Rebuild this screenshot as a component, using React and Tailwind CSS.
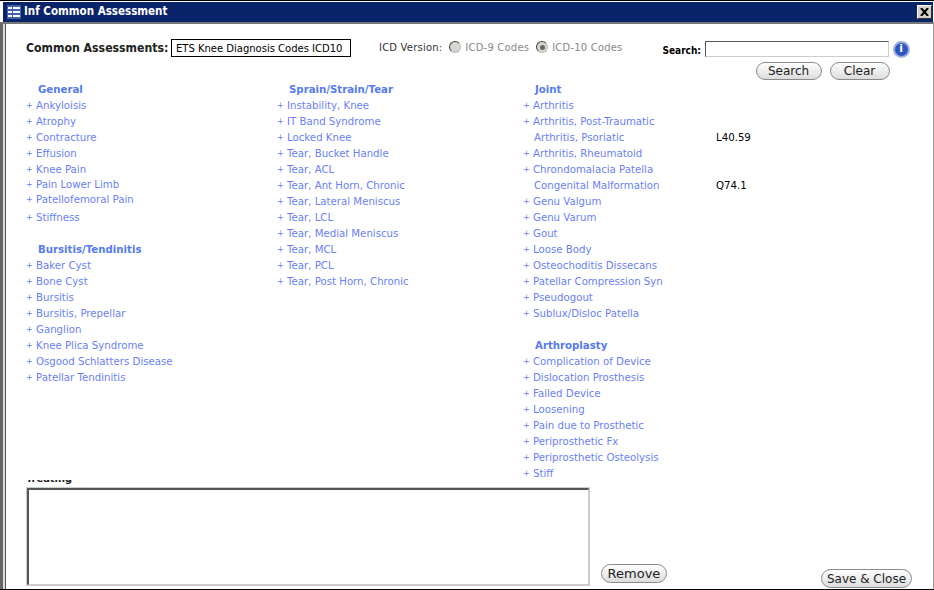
const font = { fontFamily: '"DejaVu Sans", sans-serif' };
const condensed = { fontFamily: '"DejaVu Sans Condensed", "DejaVu Sans", sans-serif' };

const Item = ({ label, className = '' }) => (
  <div className={`h-4 flex items-center text-[#6a80fa] text-[10.2px] leading-4 whitespace-nowrap ${className}`}>
    <span className="w-[10px] text-[8px]">+</span>
    <span>{label}</span>
  </div>
);

const Heading = ({ children, className = '' }) => (
  <div className={`h-4 pl-3 flex items-center text-[#557af2] text-[10.2px] font-bold ${className}`}>{children}</div>
);

const general = [
  ['Ankyloisis'], ['Atrophy'], ['Contracture'], ['Effusion'], ['Knee Pain'],
  ['Pain Lower Limb', '-mt-px'], ['Patellofemoral Pain', '-mt-px'], ['Stiffness', 'mt-[2px]'],
];
const bursitis = ['Baker Cyst', 'Bone Cyst', 'Bursitis', 'Bursitis, Prepellar', 'Ganglion', 'Knee Plica Syndrome', 'Osgood Schlatters Disease', 'Patellar Tendinitis'];
const sprain = ['Instability, Knee', 'IT Band Syndrome', 'Locked Knee', 'Tear, Bucket Handle', 'Tear, ACL', 'Tear, Ant Horn, Chronic', 'Tear, Lateral Meniscus', 'Tear, LCL', 'Tear, Medial Meniscus', 'Tear, MCL', 'Tear, PCL', 'Tear, Post Horn, Chronic'];
const joint = ['Arthritis', 'Arthritis, Post-Traumatic', ['Arthritis, Psoriatic', 'L40.59'], 'Arthritis, Rheumatoid', 'Chrondomalacia Patella', ['Congenital Malformation', 'Q74.1'], 'Genu Valgum', 'Genu Varum', 'Gout', 'Loose Body', 'Osteochoditis Dissecans', 'Patellar Compression Syn', 'Pseudogout', 'Sublux/Disloc Patella'];
const arthroplasty = ['Complication of Device', 'Dislocation Prosthesis', 'Failed Device', 'Loosening', 'Pain due to Prosthetic', 'Periprosthetic Fx', 'Periprosthetic Osteolysis', 'Stiff'];

const Pill = ({ children, className = '' }) => (
  <button className={`rounded-full border border-[#8a8a8a] bg-gradient-to-b from-white to-[#dcdcdc] text-[#222] text-[12px] leading-none flex items-center justify-center ${className}`}>{children}</button>
);

const Radio = ({ checked }) => (
  <span className="w-3 h-3 rounded-full border border-[#bbb] border-t-[#444] border-l-[#444] bg-[#d8d5cf] flex items-center justify-center">
    {checked && <span className="w-[5px] h-[5px] rounded-full bg-[#666]" />}
  </span>
);

export default function App() {
  return (
    <div className="w-[934px] h-[590px] overflow-hidden bg-white flex flex-col border-t border-t-black border-b border-b-black" style={font}>
      {/* Title bar */}
      <div className="h-[20px] mt-px ml-[3px] mr-px bg-[#0a246a] flex items-center justify-between pl-[4px] pr-[1px] shrink-0">
        <div className="flex items-center gap-[3px]">
          <svg width="14" height="14" viewBox="0 0 14 14">
            <rect width="14" height="14" fill="#3f62ad" />
            <path d="M1 2h4v2H1zM1 6h4v2H1zM1 10h4v2H1zM6 2h7v2H6zM6 6h7v2H6zM6 10h7v2H6z" fill="#fff" />
          </svg>
          <span className="text-white text-[11.500px] font-bold" style={condensed}>Inf Common Assessment</span>
        </div>
        <span className="w-[15px] h-[14px] bg-[#d4d0c8] border border-white border-r-[#333] border-b-[#333] flex items-center justify-center">
          <svg width="9" height="8" viewBox="0 0 9 8"><path d="M1 0l7 8M8 0L1 8" stroke="#000" strokeWidth="2" /></svg>
        </span>
      </div>

      {/* Window body */}
      <div className="flex-1 min-h-0 border-t-2 border-t-[#777] border-l-[3px] border-l-[#666] border-r border-r-[#999] flex">
        <div className="flex-1 min-w-0 border-l-2 border-l-[#ddd]">
          <div className="h-full border-l border-l-[#555] pl-[20px] flex flex-col">
            {/* Toolbar */}
            <div className="h-[46px] flex pt-[15px] shrink-0">
              <span className="w-[143px] pt-[1px] text-[12.200px] font-bold text-[#222] leading-4 whitespace-nowrap" style={condensed}>Common Assessments:</span>
              <span className="ml-[2px] w-[180px] h-[18px] border border-black flex items-center pl-[4px] text-[10px] text-black whitespace-nowrap">ETS Knee Diagnosis Codes ICD10</span>
              <div className="ml-[28px] mt-px flex items-center h-[14px] text-[10px] tracking-[0.2px] gap-[7px] whitespace-nowrap">
                <span className="text-[#333]">ICD Version:</span>
                <Radio />
                <span className="text-[#888] -ml-[3px] mt-px">ICD-9 Codes</span>
                <Radio checked />
                <span className="text-[#888] -ml-[3px] mt-px">ICD-10 Codes</span>
              </div>
              <div className="ml-[40px] mt-px flex flex-col">
                <div className="flex items-center">
                  <span className="w-[42px] text-[10px] font-bold text-black mt-[3px]" style={condensed}>Search:</span>
                  <span className="w-[184px] h-4 border border-[#ccc] border-t-[#555] border-l-[#555]" />
                  <span className="ml-[4px] w-[17px] h-[17px] rounded-full bg-[#2f55c4] border-2 border-[#9fb0d8] text-white text-[11px] font-bold flex items-center justify-center">i</span>
                </div>
                <div className="mt-[4px] ml-[93px] flex gap-2">
                  <Pill className="w-[66px] h-[18px]">Search</Pill>
                  <Pill className="w-[60px] h-[18px]">Clear</Pill>
                </div>
              </div>
            </div>

            {/* Code lists */}
            <div className="h-[410px] flex pt-[12px] shrink-0 overflow-hidden">
              <div className="w-[251px]">
                <Heading>General</Heading>
                {general.map(([g, c]) => <Item key={g} label={g} className={c} />)}
                <Heading className="mt-4">Bursitis/Tendinitis</Heading>
                {bursitis.map((g) => <Item key={g} label={g} />)}
              </div>
              <div className="w-[246px]">
                <Heading>Sprain/Strain/Tear</Heading>
                {sprain.map((g) => <Item key={g} label={g} />)}
              </div>
              <div className="flex-1">
                <Heading>Joint</Heading>
                {joint.map((j) => Array.isArray(j) ? (
                  <div key={j[0]} className="h-4 flex items-center text-[10.2px] whitespace-nowrap">
                    <span className="w-[193px] pl-[11px] text-[#6a80fa]">{j[0]}</span>
                    <span className="text-black">{j[1]}</span>
                  </div>
                ) : <Item key={j} label={j} />)}
                <Heading className="mt-4">Arthroplasty</Heading>
                {arthroplasty.map((g) => <Item key={g} label={g} />)}
              </div>
            </div>

            {/* Treating label, cut off by the list area in the original */}
            <div className="h-[7px] overflow-hidden flex items-end shrink-0">
              <span className="text-[11px] font-bold text-[#222] leading-4 whitespace-nowrap" style={condensed}>Treating</span>
            </div>

            {/* Notes */}
            <div className="flex-1 min-h-0 flex">
              <div className="w-[564px] h-[99px] border border-[#ccc]">
                <div className="h-full border-t-2 border-l-2 border-t-[#555] border-l-[#555] border-r border-b border-r-[#ccc] border-b-[#ccc]" />
              </div>
              <Pill className="ml-[11px] mt-[77px] w-[66px] h-[19px] text-[13px]">Remove</Pill>
              <Pill className="ml-[154px] mt-[82px] w-[91px] h-[19px]">Save &amp; Close</Pill>
            </div>
          </div>
        </div>
      </div>
    </div>
  );
}
